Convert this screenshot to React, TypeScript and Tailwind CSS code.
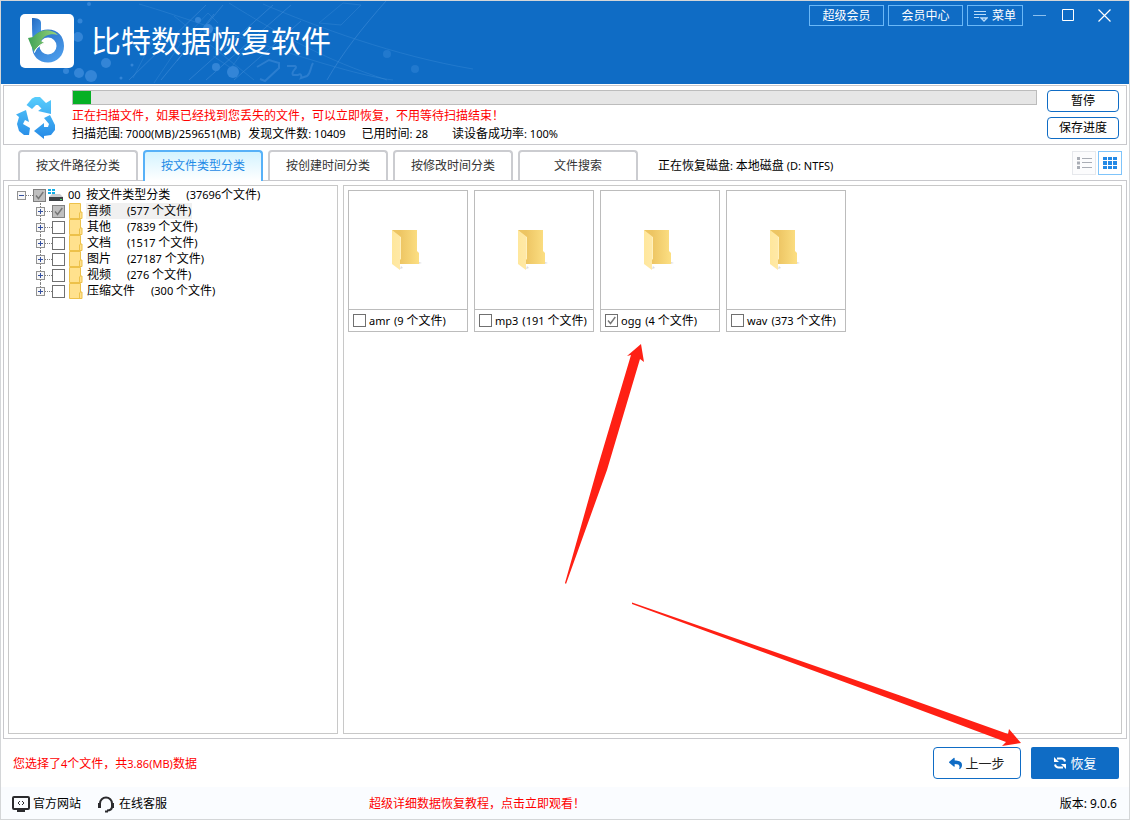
import { FaReply } from "react-icons/fa";

const TABS = ["按文件路径分类", "按文件类型分类", "按创建时间分类", "按修改时间分类", "文件搜索"];

const TREE = [
  { name: "音频", count: "(577 个文件)", checked: true },
  { name: "其他", count: "(7839 个文件)", checked: false },
  { name: "文档", count: "(1517 个文件)", checked: false },
  { name: "图片", count: "(27187 个文件)", checked: false },
  { name: "视频", count: "(276 个文件)", checked: false },
  { name: "压缩文件", count: "(300 个文件)", checked: false },
];

const FOLDERS = [
  { name: "amr", count: "(9 个文件)", checked: false },
  { name: "mp3", count: "(191 个文件)", checked: false },
  { name: "ogg", count: "(4 个文件)", checked: true },
  { name: "wav", count: "(373 个文件)", checked: false },
];

// Latin runs are set one size smaller than the Chinese text around them
function Mixed({ text }: { text: string }) {
  return (
    <>
      {text.split(/([\x20-\x7e]+)/).map((part, i) =>
        i % 2 ? (
          <span key={i} className="text-[11px]">
            {part}
          </span>
        ) : (
          part
        )
      )}
    </>
  );
}

function Checkbox({ id, checked, partial }: { id: string; checked: boolean; partial?: boolean }) {
  return (
    <span className="relative block h-[13px] w-[13px] shrink-0">
      <input
        id={id}
        type="checkbox"
        defaultChecked={checked}
        className={
          partial
            ? "peer block h-[13px] w-[13px] appearance-none border border-[#808080] bg-[#c0c0c0]"
            : "peer block h-[13px] w-[13px] appearance-none border border-[#707070] bg-white"
        }
      />
      <svg
        viewBox="0 0 13 13"
        className="pointer-events-none absolute inset-0 hidden h-[13px] w-[13px] peer-checked:block"
        fill="none"
        stroke="#777"
        strokeWidth="1.4"
      >
        <path d="M3 6.5 5.5 9.5 10.3 3" />
      </svg>
    </span>
  );
}

function Expander({ open }: { open?: boolean }) {
  return (
    <button aria-label={open ? "收起" : "展开"} className="relative z-10 h-[9px] w-[9px] shrink-0">
      <svg viewBox="0 0 9 9" className="block h-[9px] w-[9px]" shapeRendering="crispEdges">
        <rect x="0.5" y="0.5" width="8" height="8" fill="#f7f7f7" stroke="#919191" />
        <path d={open ? "M2 4.5h5" : "M2 4.5h5M4.5 2v5"} stroke="#3450a0" />
      </svg>
    </button>
  );
}

function SmallFolder() {
  return (
    <svg viewBox="0 0 14 16" className="h-4 w-3.5 shrink-0">
      <path d="M.5.5h11v8.500h1.500v6.500H.5z" fill="#ffe18d" stroke="#edc14a" />
      <path d="M10.500 15V10l1-1" fill="none" stroke="#edc14a" />
    </svg>
  );
}

function BigFolder() {
  return (
    <svg viewBox="0 0 32 42" className="h-[42px] w-8">
      <defs>
        <linearGradient id="folderBack" x1="0" x2="1">
          <stop offset="0.3" stopColor="#edc563" />
          <stop offset="1" stopColor="#fcdf83" />
        </linearGradient>
        <linearGradient id="folderFront" x1="0" x2="1">
          <stop offset="0" stopColor="#ffe79c" />
          <stop offset="1" stopColor="#ffe9a9" />
        </linearGradient>
      </defs>
      <path d="M10 40l3-1-2-2zM28 35l4-1-3-1z" fill="#dcdce0" />
      <path d="M2 1h25v21l2 2v11H8z" fill="url(#folderBack)" />
      <path d="M2 1l9 7v22l-1 1v10l-8-6z" fill="url(#folderFront)" />
      <path d="M10.500 8v22" stroke="#fff0bd" />
    </svg>
  );
}

function Logo() {
  return (
    <svg viewBox="0 0 54 54" className="h-[54px] w-[54px] shrink-0">
      <defs>
        <linearGradient id="logoBlue" x1="0" x2="0.6" y1="0" y2="1">
          <stop offset="0" stopColor="#246bc2" />
          <stop offset="1" stopColor="#4b9bea" />
        </linearGradient>
        <linearGradient id="logoGreen" x1="0" x2="1">
          <stop offset="0" stopColor="#3fa255" />
          <stop offset="1" stopColor="#9bd47d" />
        </linearGradient>
      </defs>
      <rect width="54" height="54" rx="5" fill="#fff" />
      <path d="M12 4c5 0 9 1 9 5v20h-8c-1-8-1-18-1-25z" fill="url(#logoBlue)" />
      <path
        fillRule="evenodd"
        d="M28 15.500c10 0 16 7 16 16.500s-7 16.500-16 16.500-16-6-16-16.500 7-16.500 16-16.500zm0 8a8.500 8.500 0 1 0 0 17 8.500 8.500 0 0 0 0-17z"
        fill="url(#logoBlue)"
      />
      <path d="M8 24l5-1c6-7 17-10 25-2-8-2-14 1-17 6l3 2c-4 2-8 5-9.500 9.500C12 34 10 29 8 24z" fill="url(#logoGreen)" />
      <path d="M23.500 29.500c-4 2-8 5-9 9 .5-3 5-8 9-9z" stroke="#fff" />
    </svg>
  );
}

function HeaderPattern() {
  return (
    <svg
      viewBox="0 0 480 83"
      className="absolute left-0 top-0 h-[83px] w-[480px]"
      fill="none"
      stroke="#3d8bd7"
      strokeOpacity="0.6"
    >
      <path d="M128 79 205 4M160 79 222 4M176 60 213 13M188 79 272 4M205 79 290 4M233 79 300 20M326 79c16-28 36-53 59-79" />
      <path d="M138 3c50 14 200 70 254 76M262 3c54 23 132 52 210 65M173 15l80 64M228 2c50 31 96 57 158 77" strokeOpacity="0.4" />
      <path d="M340 24l20-20-18-2-24 20zM132 77l27-52 21 17-27 40M212 55l18 12 16-22M190 30l17-18 10 10" strokeOpacity="0.4" />
      <path d="M256 66l12-7 10 3 0 5-14 13-5-2M286 65h8c4 2-5 5-2 9h5c3-2 4 1 3 3l6-2c4-3 3-8 6-13" strokeWidth="2" />
      <g fill="#3385d7" stroke="none">
        <circle cx="79" cy="20" r="2.500" /><circle cx="77" cy="36" r="5" /><circle cx="105" cy="62" r="5" />
        <circle cx="78" cy="72" r="5" /><circle cx="90" cy="75" r="6" /><circle cx="65" cy="70" r="3" />
        <circle cx="120" cy="77" r="1.500" /><circle cx="131" cy="64" r="1.500" /><circle cx="197" cy="19" r="3" />
        <circle cx="207" cy="28" r="5" /><circle cx="215" cy="66" r="4" /><circle cx="232" cy="71" r="6" />
        <circle cx="88" cy="3" r="2" /><circle cx="386" cy="53" r="4" opacity=".5" /><circle cx="414" cy="68" r="4" opacity=".5" />
      </g>
    </svg>
  );
}

function RecycleLogo() {
  return (
    <svg viewBox="0 0 40 42" className="h-[42px] w-10 shrink-0">
      <defs>
        <linearGradient id="recycle" gradientUnits="userSpaceOnUse" x1="0" x2="0" y1="0" y2="42">
          <stop offset="0" stopColor="#58cdfc" />
          <stop offset="1" stopColor="#2589e6" />
        </linearGradient>
      </defs>
      <g fill="url(#recycle)">
        <path d="M10.500 8 16 1.500 19 0h5l6 6 5-3v14l-13-3 3.500-2.500L22 8h-2l-4 4z" />
        <path d="M0 17.500 10 13l3 12-4-2-2 4 7 4-1 7H8l-5-4-2-7 2-7z" />
        <path d="M34 18l5 10v5l-4 5-7 1v3L18 34l10-8v4h4l1-3-5-6z" />
      </g>
    </svg>
  );
}

function MenuIcon() {
  return (
    <svg viewBox="0 0 14 12" className="h-3 w-3.5" fill="none" stroke="#b9dcfa">
      <path d="M0 1.500h12M0 4.500h12M0 7.500h5" />
      <path d="M7 8h6l-3 3z" strokeWidth="1.400" />
    </svg>
  );
}

function RefreshIcon() {
  return (
    <svg viewBox="0 0 14 14" className="h-3.5 w-3.5" fill="none" stroke="#fff" strokeWidth="2">
      <path d="M4 2.500h4.500c2 0 3 1 3.500 3M10 11.500H5.500c-2 0-3-1-3.500-3" />
      <path d="M1 1v5h5zM13 13V8H8z" fill="#fff" stroke="none" />
    </svg>
  );
}

function Arrows() {
  return (
    <svg
      viewBox="0 0 480 420"
      className="pointer-events-none absolute left-[559px] top-[335px] z-20 h-[420px] w-[480px]"
      fill="#ff2014"
    >
      <path d="M5 247 38 130 71 19l-4 1L81 8l3 18-4-3L47 134 6 248z" />
      <path d="M72 266.500 340 359.500 448 398l1-5 12 14-19 3 4-4-106-39.500L72 268z" />
    </svg>
  );
}

const headerButton = "flex h-[21px] items-center justify-center gap-1 border border-[#6bb8f7] text-white";

export default function App() {
  return (
    <div className="relative flex min-h-screen flex-col border border-[#d4d6d8] bg-white font-['Noto_Sans','Noto_Sans_CJK_SC',sans-serif] text-xs leading-4 text-black">
      <header className="relative flex h-[83px] shrink-0 justify-between bg-[#0f6cc5]">
        <HeaderPattern />
        <div className="relative flex items-center gap-[17px] pb-[3px] pl-[19px]">
          <Logo />
          <h1 className="text-[30px] leading-9 text-white">比特数据恢复软件</h1>
        </div>
        <div className="relative flex gap-1 pr-[18px] pt-1">
          <button className={`${headerButton} w-[75px]`}>超级会员</button>
          <button className={`${headerButton} w-[75px]`}>会员中心</button>
          <button className={`${headerButton} w-14`}>
            <MenuIcon />
            菜单
          </button>
          <div className="flex h-5 items-center gap-4 pl-1.5 text-white">
            <button aria-label="最小化">
              <svg viewBox="0 0 13 13" className="h-[13px] w-[13px]" fill="#8cc0ee">
                <path d="M0 6h13v1H0z" />
              </svg>
            </button>
            <button aria-label="最大化">
              <svg viewBox="0 0 12 12" className="h-3 w-3" fill="none" stroke="#fff">
                <path d="M.5.5h11v11H.5z" />
              </svg>
            </button>
            <button aria-label="关闭" className="pl-2">
              <svg viewBox="0 0 13 13" className="h-[13px] w-[13px]" stroke="#fff" strokeWidth="1.2">
                <path d="M.5.5l12 12M12.500.5l-12 12" />
              </svg>
            </button>
          </div>
        </div>
      </header>

      <section className="mx-0.5 mt-px flex h-[60px] shrink-0 gap-2.5 border border-[#c8c8cc] pl-3 pr-[7px]">
        <div className="w-[46px] pt-[11px]">
          <RecycleLogo />
        </div>
        <div className="min-w-0 flex-1 pt-1">
          <div role="progressbar" aria-valuenow={2} className="h-[15px] border border-[#bcbcbc] bg-[#e6e6e6]">
            <div className="h-[13px] w-[18px] bg-[#06b025]" />
          </div>
          <p className="mt-[3px] text-[#f00]">正在扫描文件，如果已经找到您丢失的文件，可以立即恢复，不用等待扫描结束！</p>
          <p className="mt-0.5 flex gap-2">
            <span><Mixed text="扫描范围: 7000(MB)/259651(MB)" /></span>
            <span><Mixed text="发现文件数: 10409" /></span>
            <span className="pl-2"><Mixed text="已用时间: 28" /></span>
            <span className="pl-4"><Mixed text="读设备成功率: 100%" /></span>
          </p>
        </div>
        <div className="flex w-[72px] flex-col gap-[5px] pt-1">
          <button className="h-[22px] rounded border border-[#0f6cc5] bg-white">暂停</button>
          <button className="h-[22px] rounded border border-[#0f6cc5] bg-white">保存进度</button>
        </div>
      </section>

      <div className="flex h-9 shrink-0 items-end gap-[5px] pl-[17px] pr-[7px]">
        {TABS.map((tab, i) => (
          <button
            key={tab}
            className={
              i === 1
                ? "relative z-10 h-[31px] w-[120px] rounded-t border-2 border-b-0 border-[#57b1f8] bg-linear-to-b from-[#d3f3ff] to-white pb-0.5 text-[#1e8ae6]"
                : "mb-px h-[30px] w-[120px] rounded-t border-2 border-b-0 border-[#cbccd0] bg-white pb-px text-[#333]"
            }
          >
            {tab}
          </button>
        ))}
        <p className="ml-[15px] flex-1 pb-[7px]"><Mixed text="正在恢复磁盘: 本地磁盘 (D: NTFS)" /></p>
        <div className="flex gap-0.5 pb-1.5">
          <button aria-label="列表" className="flex h-6 w-6 items-center justify-center border border-[#e6e8ec] bg-[#fcfcfd]">
            <svg viewBox="0 0 15 12" className="h-3 w-[15px]" fill="#a9adb5">
              <path d="M0 0h3v3H0zM0 4.500h3v3H0zM0 9h3v3H0zM5 1h10v1H5zM5 5h10v1H5zM5 10h10v1H5z" />
            </svg>
          </button>
          <button aria-label="图标" className="flex h-6 w-6 items-center justify-center border border-[#7fc4fa] bg-white">
            <svg viewBox="0 0 14 12" className="h-3 w-3.5" fill="#2389e6">
              <path d="M0 0h4v3H0zM5 0h4v3H5zM10 0h4v3h-4zM0 4h4v4H0zM5 4h4v4H5zM10 4h4v4h-4zM0 9h4v3H0zM5 9h4v3H5zM10 9h4v3h-4z" />
            </svg>
          </button>
        </div>
      </div>

      <main className="mx-0.5 -mt-px flex flex-1 gap-[5px] border border-[#c8c8cc] p-1">
        <aside className="w-[330px] shrink-0 border border-[#c8c8c8] pl-2 pt-px">
          <div className="flex h-4 items-center">
            <Expander open />
            <span className="w-[7px] border-t border-dotted border-[#808080]" />
            <Checkbox id="all" checked partial />
            <svg viewBox="0 0 16 14" className="ml-0.5 h-3.5 w-4">
              <path d="M0 1h3v2H0zM4 1h3v2H4zM0 4h3v2H0zM4 4h3v2H4z" fill="#10aee8" />
              <path d="M1 9l3-3h8l3 3z" fill="#c9cccf" />
              <path d="M1 9h14v4H1z" fill="#3e4145" />
              <path d="M12 11h2v1h-2z" fill="#58e07a" />
            </svg>
            <label htmlFor="all" className="ml-1 whitespace-pre">
              <Mixed text="00  按文件类型分类" />
              <span className="pl-4"><Mixed text="(37696个文件)" /></span>
            </label>
          </div>
          <ul className="ml-[23px]">
            {TREE.map((item, i) => (
              <li key={item.name} className="relative -ml-1 flex h-4 items-center">
                <span
                  className={
                    i === TREE.length - 1
                      ? "absolute left-1 top-0 h-2 border-l border-dotted border-[#808080]"
                      : "absolute left-1 top-0 h-4 border-l border-dotted border-[#808080]"
                  }
                />
                <Expander />
                <span className="w-[7px] border-t border-dotted border-[#808080]" />
                <Checkbox id={`type-${i}`} checked={item.checked} partial={item.checked} />
                <span className="w-1" />
                <SmallFolder />
                <label
                  htmlFor={`type-${i}`}
                  className={i === 0 ? "ml-[3px] flex h-4 gap-4 bg-[#f0f0f0] px-px" : "ml-[3px] flex h-4 gap-4 px-px"}
                >
                  <span>{item.name}</span>
                  <span><Mixed text={item.count} /></span>
                </label>
              </li>
            ))}
          </ul>
        </aside>
        <section className="flex flex-1 flex-wrap content-start gap-1.5 border border-[#c8c8c8] p-1">
          {FOLDERS.map((folder) => (
            <div key={folder.name} className="w-[120px] border border-[#bcbcbc]">
              <div className="flex h-[118px] items-center pl-[41px]">
                <BigFolder />
              </div>
              <div className="flex h-[22px] items-center gap-[3px] border-t border-[#bcbcbc] pl-1">
                <Checkbox id={folder.name} checked={folder.checked} />
                <label htmlFor={folder.name} className="flex gap-1 whitespace-nowrap">
                  <span className="text-[11px]">{folder.name}</span>
                  <span><Mixed text={folder.count} /></span>
                </label>
              </div>
            </div>
          ))}
        </section>
      </main>

      <div className="flex h-12 shrink-0 items-center gap-2.5 pl-3 pr-2.5">
        <p className="flex-1 pt-0.5 text-[#f00]"><Mixed text="您选择了4个文件，共3.86(MB)数据" /></p>
        <button className="flex h-8 w-[88px] items-center justify-center gap-[3px] rounded border border-[#0f6cc5] bg-white text-[13px] text-[#222]">
          <FaReply className="text-[#0f6cc5]" />
          上一步
        </button>
        <button className="flex h-8 w-[88px] items-center justify-center gap-[3px] rounded-xs bg-[#0f6cc5] text-[13px] text-white">
          <RefreshIcon />
          恢复
        </button>
      </div>

      <footer className="grid h-8 shrink-0 grid-cols-[357px_1fr_auto] items-center bg-[#fafcff] pl-[11px] pr-3 pt-0.5">
        <div className="flex gap-4">
          <a href="#site" className="flex items-center gap-[3px]">
            <svg viewBox="0 0 18 16" className="h-4 w-[18px]" fill="none" stroke="#2b2b2e">
              <rect x="1" y="1" width="16" height="12" rx="1" strokeWidth="2" />
              <path d="M8 5 6 7l2 2M10 5l2 2-2 2" />
              <path d="M5 15h8" strokeWidth="2" />
            </svg>
            官方网站
          </a>
          <a href="#service" className="flex items-center gap-1">
            <svg viewBox="0 0 18 17" className="h-[17px] w-[18px]" fill="none" stroke="#2b2b2e">
              <path d="M3 7.500a6 6 0 0 1 12 0v3c0 3-2 4-5 4" strokeWidth="2" />
              <path d="M2.500 7v5M15.500 7v5" strokeWidth="3" />
              <path d="M8 15.500h3" strokeWidth="2" />
            </svg>
            在线客服
          </a>
        </div>
        <a href="#guide" className="text-[#f00]">超级详细数据恢复教程，点击立即观看！</a>
        <p>版本: 9.0.6</p>
      </footer>

      <Arrows />
    </div>
  );
}
